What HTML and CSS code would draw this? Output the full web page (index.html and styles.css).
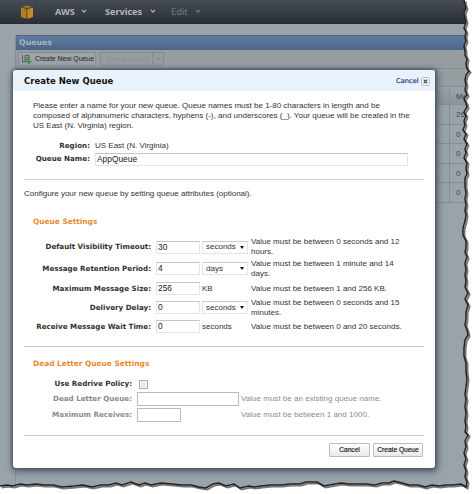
FILE: index.html
```html
<!DOCTYPE html>
<html lang="en">
<head>
<meta charset="utf-8">
<title>Create New Queue</title>
<link rel="stylesheet" href="styles.css">
</head>
<body>
<div class="page">
  <header class="topbar">
    <svg class="logo" width="14" height="14" viewBox="0 0 14 14"><path fill="#b87c25" d="M1 2.5 6.4 4v9.7L1 12z"/><path fill="#c88b2c" d="M7.3 4 13 2.5V12l-5.700 1.700z"/><path fill="#a87224" d="M2 1.600 7 .5l5 1.100L7 3z"/><path fill="#8f6422" d="M4.200 1.500h1V6l-1-.3zM9 1.500h1V6L9 6.300z"/></svg>
    <span class="nav aws">AWS</span><svg class="chev" width="6" height="5" viewBox="0 0 6 5"><path d="M1 1 3 3.200 5 1"/></svg>
    <span class="nav services">Services</span><svg class="chev" width="6" height="5" viewBox="0 0 6 5"><path d="M1 1 3 3.200 5 1"/></svg>
    <span class="nav edit">Edit</span><svg class="chev dim" width="6" height="5" viewBox="0 0 6 5"><path d="M1 1 3 3.200 5 1"/></svg>
  </header>
  <main class="panel">
    <div class="panel-title">Queues</div>
    <div class="toolbar">
      <div class="tool create">
        <svg width="10" height="10" viewBox="0 0 10 10"><path fill="none" stroke="#53606a" d="M.5 1v7h3M3 1.500h4v6H3zM3 3.500h4M3 5.500h4"/><path fill="#4c8a55" d="M6 5h2v1.500h1.500v2H8V10H6V8.500H4.500v-2H6z"/></svg>
        <span>Create New Queue</span>
      </div>
      <div class="tool actions"><span>Queue Actions</span><i><b></b></i></div>
    </div>
    <div class="spacer"></div>
    <div class="row head"><span>Me</span></div>
    <div class="row"><span>262</span></div>
    <div class="row"><span>0</span></div>
    <div class="row"><span>0</span></div>
    <div class="row"><span>0</span></div>
    <div class="row"><span>0</span></div>
  </main>
</div>

<section class="modal">
  <div class="modal-head"><h1>Create New Queue</h1><span class="cancel">Cancel</span><svg class="close" width="9" height="9" viewBox="0 0 9 9"><rect x=".5" y=".5" width="8" height="8" rx="1" fill="#f5f5f5" stroke="#b9bdc2"/><path d="m2.700 2.700 3.600 3.600m0-3.600L2.700 6.300" stroke="#444" stroke-width="1.200"/></svg></div>
  <div class="modal-body">
    <div class="intro">
      <p>Please enter a name for your new queue. Queue names must be 1-80 characters in length and be</p>
      <p>composed of alphanumeric characters, hyphens (-), and underscores (_). Your queue will be created in the</p>
      <p>US East (N. Virginia) region.</p>
    </div>
    <div class="field region"><label>Region:</label><span>US East (N. Virginia)</span></div>
    <div class="field name"><label>Queue Name:</label><div class="input">AppQueue</div></div>
    <div class="configure">Configure your new queue by setting queue attributes (optional).</div>
    <h2>Queue Settings</h2>
    <div class="settings">
      <div class="set tall"><label>Default Visibility Timeout:</label><div class="input">30</div><div class="select">seconds<i></i></div><p>Value must be between 0 seconds and 12<br>hours.</p></div>
      <div class="set tall"><label>Message Retention Period:</label><div class="input">4</div><div class="select">days<i></i></div><p>Value must be between 1 minute and 14<br>days.</p></div>
      <div class="set"><label>Maximum Message Size:</label><div class="input">256</div><div class="unit">KB</div><p>Value must be between 1 and 256 KB.</p></div>
      <div class="set"><label>Delivery Delay:</label><div class="input">0</div><div class="select">seconds<i></i></div><p>Value must be between 0 seconds and 15<br>minutes.</p></div>
      <div class="set"><label>Receive Message Wait Time:</label><div class="input">0</div><div class="unit">seconds</div><p>Value must be between 0 and 20 seconds.</p></div>
    </div>
    <div class="dead">
      <h2>Dead Letter Queue Settings</h2>
      <div class="drow policy"><label>Use Redrive Policy:</label><div class="check"></div></div>
      <div class="drow off"><label>Dead Letter Queue:</label><div class="input wide"></div><p>Value must be an existing queue name.</p></div>
      <div class="drow off"><label>Maximum Receives:</label><div class="input short"></div><p>Value must be between 1 and 1000.</p></div>
    </div>
    <footer><button class="b1">Cancel</button><button class="b2">Create Queue</button></footer>
  </div>
</section>

<svg class="torn" width="474" height="494" viewBox="0 0 474 494">
  <defs><filter id="s" x="-5%" y="-5%" width="110%" height="110%"><feGaussianBlur stdDeviation=".7"/></filter></defs>
  <path class="outside"/>
  <path class="torn-shadow" filter="url(#s)"/>
  <path class="torn-line"/>
</svg>
<script src="edge.js"></script>
</body>
</html>
```

FILE: edge.js
```js
// Draw the ragged right and bottom page border.
var right = [[464,0],[465,5],[466,8],[464,13],[465,18],[466,22],[464,28],[466,32],[465,37],[466,41],[464,46],[465,51],[465,55],[467,59],[466,64],[467,69],[469,71],[466,75],[465,80],[466,85],[465,90],[467,95],[464,99],[466,103],[467,107],[464,112],[466,116],[464,121],[465,125],[463,130],[466,134],[464,139],[467,144],[465,149],[466,153],[464,158],[467,163],[466,168],[467,174],[465,178],[465,187],[466,193],[465,199],[466,205],[465,210],[466,215],[465,221],[463,228],[463,235],[466,241],[466,248],[465,252],[467,257],[465,263],[466,270],[465,275],[466,281],[465,287],[468,293],[465,299],[468,305],[466,312],[466,319],[465,325],[467,330],[468,335],[465,340],[464,348],[464,356],[466,363],[466,371],[467,379],[466,387],[465,394],[466,400],[465,406],[466,414],[465,421],[466,427],[465,432],[468,435],[465,441],[466,447],[464,453],[466,459],[464,465],[466,471],[465,477],[467,482],[466,487]];
var bottom = [[461,484],[453,485],[447,485],[439,486],[432,485],[425,487],[418,485],[409,485],[402,483],[394,481],[389,483],[382,483],[375,485],[366,484],[359,484],[349,484],[341,483],[335,484],[324,486],[317,482],[306,482],[300,484],[290,484],[281,485],[271,485],[261,486],[254,487],[249,486],[240,488],[234,484],[226,486],[219,483],[213,484],[206,488],[199,487],[191,485],[182,485],[172,484],[161,483],[151,485],[145,483],[139,485],[131,482],[122,485],[116,483],[109,485],[101,485],[92,487],[83,485],[74,486],[62,487],[53,485],[44,485],[36,484],[27,485],[20,484],[13,486],[7,485],[0,486]];
var edge = 'M' + right.concat(bottom).map(function (p) { return p.join(' '); }).join('L');
document.querySelector('.outside').setAttribute('d', edge + 'V494H474V0Z');
document.querySelector('.torn-shadow').setAttribute('d', edge);
document.querySelector('.torn-line').setAttribute('d', edge);
```

FILE: styles.css
```css
* { box-sizing: border-box; }
body { margin: 0; width: 474px; height: 494px; overflow: hidden; background: #fff; font: 8px/10px "Liberation Sans", sans-serif; color: #333; position: relative; }
h1, h2, p { margin: 0; white-space: nowrap; }
.page { height: 494px; background: #9ba3aa; }
.topbar { height: 24px; display: flex; align-items: center; padding-left: 20px; background: linear-gradient(#454b53, #2c3137); border-bottom: 1px solid #272b30; color: #b3b6ba; }
.nav { font: bold 9.1px/12px "Noto Sans", sans-serif; white-space: nowrap; padding-top: 1px; }
.aws { margin-left: 21px; width: 19px; margin-right: 7px; }
.services { margin-left: 18px; width: 38px; margin-right: 7px; }
.edit { margin-left: 15px; width: 17px; margin-right: 7px; color: #73777c; font-weight: normal; font-size: 9.3px; }
.chev path { fill: none; stroke: #aeb2b6; stroke-width: 1.2; }
.chev.dim path { stroke: #73777c; }
.panel { margin: 11px 0 0 15px; height: 459px; border-left: 1px solid #858e96; }
.panel-title { height: 15px; background: linear-gradient(#5f7c9e, #4c6587); border-top: 1px solid #506682; color: #a7b3c2; font: bold 7.8px/14px "DejaVu Sans", sans-serif; padding-left: 3px; }
.toolbar { height: 18px; display: flex; padding: 2px 2px; gap: 4px; background: #959da1; }
.tool { height: 14px; border: 1px solid #858d92; border-radius: 1px; display: flex; align-items: center; font-size: 7.4px; white-space: nowrap; }
.create { width: 78px; color: #20262a; padding-left: 3px; gap: 3px; background: #9da4a7; font-size: 6.9px; }
.create svg { flex: none; }
.actions { width: 64px; color: #8a9297; padding-left: 4px; font-size: 7px; }
.actions span { width: 47px; }
.actions i { height: 12px; border-left: 1px solid #858d92; display: flex; align-items: center; padding-left: 3px; }
.actions b { border: 2px solid transparent; border-top-color: #7c8489; border-bottom: 0; }
.spacer { height: 18px; background: #969ea2; border-top: 1px solid #858d93; }
.row { height: 19.6px; border-bottom: 1px solid #858d95; padding-left: 433px; line-height: 19px; color: #3d444a; }
.row span { display: block; border-left: 1px solid #858d95; padding-left: 6px; height: 100%; }
.head { height: 19px; border-top: 1px solid #858d93; background: linear-gradient(#9ca3a9, #8b9299); }
.modal { position: absolute; left: 13px; top: 70px; width: 422px; height: 398px; background: #fff; border-radius: 3px; box-shadow: 0 0 3px 1px #4c535e, 1px 2px 7px 2px #57606b; }
.modal-head { height: 21px; background: #e8f2fd; border-radius: 3px 3px 0 0; display: flex; align-items: center; padding: 1px 5px 0 11px; }
h1 { font: bold 8.5px/12px "DejaVu Sans", sans-serif; color: #111; flex: 1; }
.cancel { font: 6.7px/10px "DejaVu Sans", sans-serif; color: #343a85; -webkit-text-stroke: .2px #343a85; width: 23px; margin-right: 2px; }
.modal-body { padding: 10px 11px 0; }
.intro { padding-left: 9px; height: 38px; line-height: 9.8px; }
.field { display: flex; align-items: center; }
label { font: bold 7.15px/10px "DejaVu Sans", sans-serif; text-align: right; white-space: nowrap; color: #333; }
.field label { width: 66px; margin-right: 5px; }
.region { height: 13px; }
.name { height: 14px; }
.input { border: 1px solid #e2e4e7; border-top-color: #c4c7cb; height: 13px; font-size: 8.4px; line-height: 11px; padding-left: 1px; background: #fff; color: #222; }
.name .input { width: 313px; }
.configure { border-top: 1px solid #d2d2d2; margin-top: 13px; padding-top: 9px; height: 37px; white-space: nowrap; }
h2 { font: bold 7.4px/12px "DejaVu Sans", sans-serif; color: #e88a30; margin-left: 9px; }
.settings { padding-top: 8px; height: 118px; }
.set { height: 19px; display: flex; align-items: center; }
.set.tall { height: 22px; }
.set.tall + .tall { height: 21px; }
.set label { width: 127px; margin-right: 5px; }
.set .input { width: 44px; margin-right: 2px; }
.select { width: 46px; height: 13px; border: 1px solid #e2e4e7; border-top-color: #c9ccd0; padding: 0 4px 0 3px; line-height: 12px; display: flex; align-items: center; justify-content: space-between; }
.select i { border: 2.5px solid transparent; border-top: 3px solid #111; border-bottom: 0; margin-right: -1px; }
.unit { width: 46px; }
.set p { margin-left: 3px; line-height: 9.8px; }
.dead { border-top: 1px solid #c9c9c9; border-bottom: 1px solid #c9c9c9; height: 90px; padding-top: 11px; }
.drow { height: 16px; display: flex; align-items: center; }
.drow label { width: 108px; margin-right: 5px; }
.drow.policy { height: 14px; margin-top: 7px; }
.check { width: 9px; height: 9px; margin-left: 2px; border: 1px solid #aaa; background: #e9e9e9; box-shadow: inset 0 0 0 1px #f8f8f8; }
.off, .off label { color: #8c8c8c; }
.off .input { border-color: #bbb; height: 14px; }
.wide { width: 102px; }
.short { width: 44px; margin-right: 58px; }
.off p { margin-left: 2px; letter-spacing: .02px; }
footer { display: flex; justify-content: flex-end; gap: 3px; padding: 7px 1px 0 0; }
button { height: 14px; padding: 0; border: 1px solid #bbb; border-radius: 1px; background: linear-gradient(#fff, #e9e9e9); font: 6.6px/12px "Liberation Sans", sans-serif; color: #111; -webkit-text-stroke: .15px #111; white-space: nowrap; }
.b1 { width: 41px; }
.b2 { width: 50px; }
.torn { position: absolute; left: 0; top: 0; }
.outside { fill: #fff; }
.torn-shadow { fill: none; stroke: #777; stroke-width: 2; transform: translate(1.5px, 1.5px); }
.torn-line { fill: none; stroke: #222; stroke-width: 1.5; }
```
